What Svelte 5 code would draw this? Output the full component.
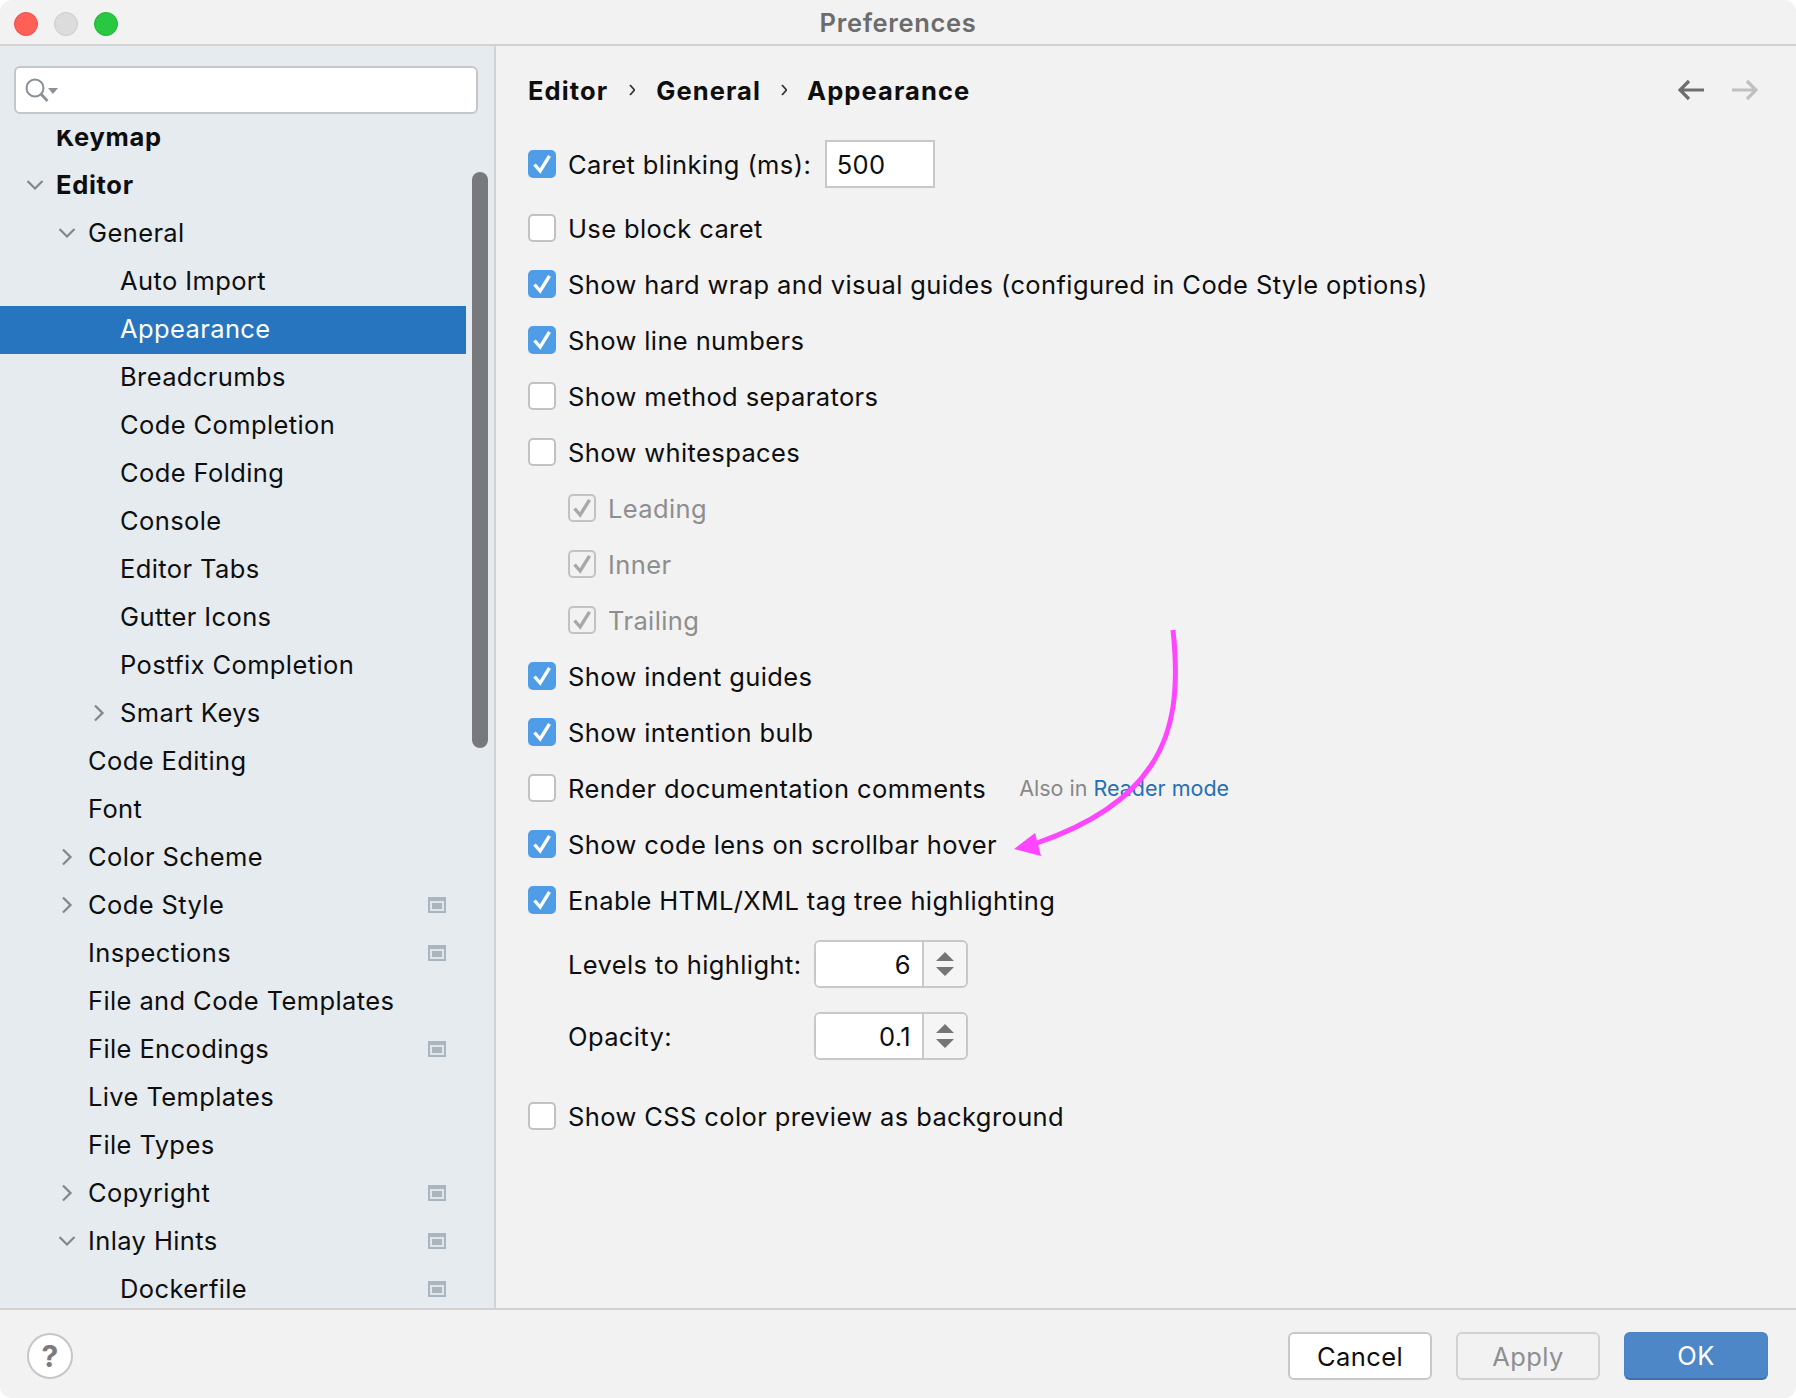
<script>
  const tree = [
    { label: 'Keymap', level: 0, bold: true },
    { label: 'Editor', level: 0, bold: true, open: true },
    { label: 'General', level: 1, open: true },
    { label: 'Auto Import', level: 2 },
    { label: 'Appearance', level: 2, selected: true },
    { label: 'Breadcrumbs', level: 2 },
    { label: 'Code Completion', level: 2 },
    { label: 'Code Folding', level: 2 },
    { label: 'Console', level: 2 },
    { label: 'Editor Tabs', level: 2 },
    { label: 'Gutter Icons', level: 2 },
    { label: 'Postfix Completion', level: 2 },
    { label: 'Smart Keys', level: 2, closed: true },
    { label: 'Code Editing', level: 1 },
    { label: 'Font', level: 1 },
    { label: 'Color Scheme', level: 1, closed: true },
    { label: 'Code Style', level: 1, closed: true, scoped: true },
    { label: 'Inspections', level: 1, scoped: true },
    { label: 'File and Code Templates', level: 1 },
    { label: 'File Encodings', level: 1, scoped: true },
    { label: 'Live Templates', level: 1 },
    { label: 'File Types', level: 1 },
    { label: 'Copyright', level: 1, closed: true, scoped: true },
    { label: 'Inlay Hints', level: 1, open: true, scoped: true },
    { label: 'Dockerfile', level: 2, scoped: true }
  ];

  const options = [
    { label: 'Use block caret', checked: false },
    { label: 'Show hard wrap and visual guides (configured in Code Style options)', checked: true },
    { label: 'Show line numbers', checked: true },
    { label: 'Show method separators', checked: false },
    { label: 'Show whitespaces', checked: false },
    { label: 'Leading', checked: true, disabled: true },
    { label: 'Inner', checked: true, disabled: true },
    { label: 'Trailing', checked: true, disabled: true },
    { label: 'Show indent guides', checked: true },
    { label: 'Show intention bulb', checked: true },
    { label: 'Render documentation comments', checked: false, hint: true },
    { label: 'Show code lens on scrollbar hover', checked: true },
    { label: 'Enable HTML/XML tag tree highlighting', checked: true }
  ];

  const spinners = [
    { label: 'Levels to highlight:', value: '6' },
    { label: 'Opacity:', value: '0.1' }
  ];
</script>

{#snippet checkbox(checked, disabled)}
  <span class="cb" class:on={checked && !disabled} class:off={disabled}>
    {#if checked}
      <svg viewBox="0 0 28 28" width="28" height="28">
        <path d="M6.5 14.5 L12.2 21 L21.5 5.8" fill="none" stroke={disabled ? '#a8a8a8' : '#fff'} stroke-width="3.4" />
      </svg>
    {/if}
  </span>
{/snippet}

<div class="window">
  <header class="titlebar">
    <div class="lights">
      <span class="light red"></span>
      <span class="light grey"></span>
      <span class="light green"></span>
    </div>
    <span class="title">Preferences</span>
  </header>

  <div class="body">
    <aside class="sidebar">
      <div class="search">
        <svg width="34" height="30" viewBox="0 0 34 30">
          <circle cx="11" cy="12" r="8.5" fill="none" stroke="#8a9096" stroke-width="2" />
          <path d="M17 18 L23.5 25" stroke="#8a9096" stroke-width="2.6" />
          <path d="M24 12 H34 L29 18 Z" fill="#8a9096" />
        </svg>
      </div>
      <div class="tree">
        <ul>
          {#each tree as item}
            <li class="node l{item.level}" class:bold={item.bold} class:selected={item.selected}>
              {#if item.open}
                <svg class="chev" width="18" height="12" viewBox="0 0 18 12"><path d="M1.5 2 L9 9.5 L16.5 2" /></svg>
              {:else if item.closed}
                <svg class="chev closed" width="12" height="18" viewBox="0 0 12 18"><path d="M2 1.5 L9.5 9 L2 16.5" /></svg>
              {/if}
              <span>{item.label}</span>
              {#if item.scoped}
                <span class="scope"><span></span></span>
              {/if}
            </li>
          {/each}
        </ul>
      </div>
      <div class="thumb"></div>
    </aside>

    <main class="content">
      <div class="crumbs">
        <span>Editor</span>
        <svg width="6" height="12" viewBox="0 0 6 12"><path d="M1 1 L5.5 6 L1 11" /></svg>
        <span>General</span>
        <svg class="tight" width="6" height="12" viewBox="0 0 6 12"><path d="M1 1 L5.5 6 L1 11" /></svg>
        <span>Appearance</span>
        <div class="nav">
          <svg width="26" height="22" viewBox="0 0 26 22"><path d="M26 11 H3 M11 2 L2 11 L11 20" fill="none" stroke="#6e6e6e" stroke-width="3.2" /></svg>
          <svg width="26" height="22" viewBox="0 0 26 22"><path d="M0 11 H23 M15 2 L24 11 L15 20" fill="none" stroke="#c0c0c0" stroke-width="3.2" /></svg>
        </div>
      </div>

      <div class="row caret">
        {@render checkbox(true, false)}
        <span class="lbl">Caret blinking (ms):</span>
        <span class="field">500</span>
      </div>

      {#each options as opt}
        <div class="row" class:sub={opt.disabled}>
          {@render checkbox(opt.checked, opt.disabled)}
          <span class="lbl">{opt.label}</span>
          {#if opt.hint}
            <span class="hint">Also in <a href="#reader">Reader mode</a></span>
          {/if}
        </div>
      {/each}

      {#each spinners as s}
        <div class="spin-row">
          <span class="spin-label">{s.label}</span>
          <div class="spinner">
            <span class="spin-value">{s.value}</span>
            <span class="spin-btns">
              <svg width="18" height="24" viewBox="0 0 18 24"><path d="M9 0 L18 9 H0 Z M0 15 H18 L9 24 Z" /></svg>
            </span>
          </div>
        </div>
      {/each}

      <div class="row last">
        {@render checkbox(false, false)}
        <span class="lbl">Show CSS color preview as background</span>
      </div>

      <svg class="annotation" width="190" height="240" viewBox="0 0 190 240">
        <path d="M162 4 C168 60 164 105 139 141 C115 177 75 200 26 217" fill="none" stroke="#ff45ff" stroke-width="5" />
        <path d="M3 223 L24 207 L30 230 Z" fill="#ff45ff" />
      </svg>
    </main>
  </div>

  <footer class="footer">
    <button class="help">?</button>
    <div class="actions">
      <button class="btn">Cancel</button>
      <button class="btn apply">Apply</button>
      <button class="btn ok">OK</button>
    </div>
  </footer>
</div>

<style>
  :global(body) {
    background: #fff;
    overflow: hidden;
  }

  .window {
    width: 1796px;
    height: 1398px;
    display: flex;
    flex-direction: column;
    background: #f2f2f2;
    border-radius: 12px;
    overflow: hidden;
    font-family: Inter, "Liberation Sans", sans-serif;
    font-size: 25.5px;
    letter-spacing: 0.39px;
    color: #0e0e0e;
  }

  .titlebar {
    flex: none;
    height: 44px;
    display: flex;
    align-items: center;
    justify-content: center;
    position: relative;
    border-bottom: 2px solid #d2d2d2;
  }

  .lights {
    position: absolute;
    left: 14px;
    top: 12px;
    display: flex;
    gap: 16px;
  }

  .light {
    width: 24px;
    height: 24px;
    border-radius: 50%;
    box-sizing: border-box;
  }

  .red { background: #fe5f57; border: 1px solid #e9524a; }
  .grey { background: #dcdcdc; border: 1px solid #cbcbcb; }
  .green { background: #28c840; border: 1px solid #1fb533; }

  .title {
    font-size: 25.5px;
    font-weight: 600;
    color: #6c6c6c;
    letter-spacing: 0.65px;
  }

  .body {
    flex: 1;
    display: flex;
    min-height: 0;
  }

  .sidebar {
    flex: none;
    width: 494px;
    background: #e6ebef;
    border-right: 2px solid #d2d2d2;
    position: relative;
    display: flex;
    flex-direction: column;
  }

  .search {
    flex: none;
    box-sizing: border-box;
    width: 464px;
    height: 48px;
    margin: 20px 0 16px 14px;
    padding: 8px 0 0 8px;
    background: #fff;
    border: 2px solid #c4c6c8;
    border-radius: 6px;
  }

  .tree {
    flex: 1;
    min-height: 0;
    overflow: hidden;
    width: 466px;
    position: relative;
  }

  .tree::before {
    content: '';
    position: absolute;
    left: 0;
    right: 0;
    top: 0;
    height: 8px;
    background: linear-gradient(#e6ebef 30%, rgba(230, 235, 239, 0));
  }

  ul {
    list-style: none;
    margin: -16px 0 0;
    padding: 0;
  }

  .node {
    height: 48px;
    box-sizing: border-box;
    padding-bottom: 3px;
    display: flex;
    align-items: center;
    position: relative;
    white-space: nowrap;
  }

  .l0 { padding-left: 56px; }
  .l1 { padding-left: 88px; }
  .l2 { padding-left: 120px; }

  .bold {
    font-weight: 700;
    letter-spacing: 0.7px;
  }

  .selected {
    background: #2774bf;
    color: #fff;
  }

  .chev {
    position: absolute;
    fill: none;
    stroke: #83868a;
    stroke-width: 2.2;
  }

  .l0 .chev { left: 26px; }
  .l1 .chev { left: 58px; }
  .l2 .chev { left: 90px; }
  .l1 .chev.closed { left: 61px; }
  .l2 .chev.closed { left: 93px; }

  .scope {
    position: absolute;
    left: 428px;
    width: 18px;
    height: 16px;
    box-sizing: border-box;
    border: 2px solid #a9b5bf;
    border-top-width: 4px;
    background: #e0e5e9;
    padding: 2px;
    display: flex;
  }

  .scope span {
    flex: 1;
    background: #a9b5bf;
  }

  .thumb {
    position: absolute;
    left: 472px;
    top: 126px;
    width: 16px;
    height: 576px;
    border-radius: 8px;
    background: #78797c;
  }

  .content {
    flex: 1;
    min-width: 0;
    padding-left: 32px;
    position: relative;
  }

  .crumbs {
    height: 90px;
    box-sizing: border-box;
    padding: 0 38px 2px 0;
    display: flex;
    align-items: center;
    gap: 21px;
    font-weight: 700;
    letter-spacing: 1.1px;
  }

  .crumbs > svg {
    fill: none;
    stroke: #333;
    stroke-width: 1.8;
  }

  .crumbs > svg.tight {
    margin: 0 -1px;
  }

  .nav {
    margin-left: auto;
    display: flex;
    gap: 28px;
  }

  .row {
    height: 56px;
    display: flex;
    align-items: center;
    gap: 12px;
  }

  .row.caret {
    margin-bottom: 8px;
  }

  .row.sub {
    padding-left: 40px;
    color: #8e8e8e;
  }

  .row.last {
    margin-top: 16px;
  }

  .lbl {
    padding-top: 1px;
  }

  .cb {
    flex: none;
    width: 28px;
    height: 28px;
    border-radius: 5px;
    background: #fff;
    box-shadow: inset 0 0 0 2px #c2c2c2;
  }

  .cb.on {
    background: #4e9de6;
    box-shadow: none;
  }

  .cb.off {
    background: #f2f2f2;
    box-shadow: inset 0 0 0 2px #c2c2c2;
  }

  .cb svg {
    display: block;
  }

  .field {
    box-sizing: border-box;
    width: 110px;
    height: 48px;
    margin-left: 1.5px;
    padding-left: 10px;
    display: flex;
    align-items: center;
    background: #fff;
    border: 2px solid #c8c8c8;
  }

  .hint {
    margin-left: 21px;
    font-size: 21.5px;
    letter-spacing: 0;
    color: #888;
  }

  .hint a {
    color: #2470b3;
    text-decoration: none;
  }

  .spin-row {
    height: 72px;
    display: flex;
    align-items: center;
    padding-left: 40px;
  }

  .spin-label {
    width: 246px;
  }

  .spinner {
    box-sizing: border-box;
    width: 154px;
    height: 48px;
    display: flex;
    border: 2px solid #c8c8c8;
    border-radius: 6px;
    overflow: hidden;
  }

  .spin-value {
    width: 108px;
    box-sizing: border-box;
    padding-right: 11px;
    display: flex;
    align-items: center;
    justify-content: flex-end;
    background: #fff;
    border-right: 2px solid #c8c8c8;
  }

  .spin-btns {
    flex: 1;
    display: flex;
    align-items: center;
    justify-content: center;
    background: #f5f5f5;
  }

  .spin-btns svg {
    fill: #757575;
  }

  .annotation {
    position: absolute;
    left: 515px;
    top: 580px;
    pointer-events: none;
  }

  .footer {
    flex: none;
    height: 90px;
    box-sizing: border-box;
    border-top: 2px solid #d2d2d2;
    display: flex;
    align-items: center;
    justify-content: space-between;
    padding: 4px 28px 0 27px;
  }

  button {
    font: inherit;
    letter-spacing: inherit;
    color: inherit;
    cursor: default;
  }

  .help {
    width: 46px;
    height: 46px;
    padding: 0;
    border-radius: 50%;
    background: #fff;
    border: 2px solid #c6c6c6;
    color: #7b7b7b;
    font-size: 30px;
    font-weight: 700;
  }

  .actions {
    display: flex;
    gap: 24px;
  }

  .btn {
    width: 144px;
    height: 48px;
    padding: 0;
    box-sizing: border-box;
    border-radius: 6px;
    background: #fff;
    border: 2px solid #c8c8c8;
  }

  .btn.apply {
    background: #f2f2f2;
    border-color: #d2d2d2;
    color: #8f8f8f;
  }

  .btn.ok {
    background: #4d87c7;
    border: 1px solid #4a82c2;
    border-bottom: 2px solid #3d70b0;
    color: #fff;
  }
</style>
